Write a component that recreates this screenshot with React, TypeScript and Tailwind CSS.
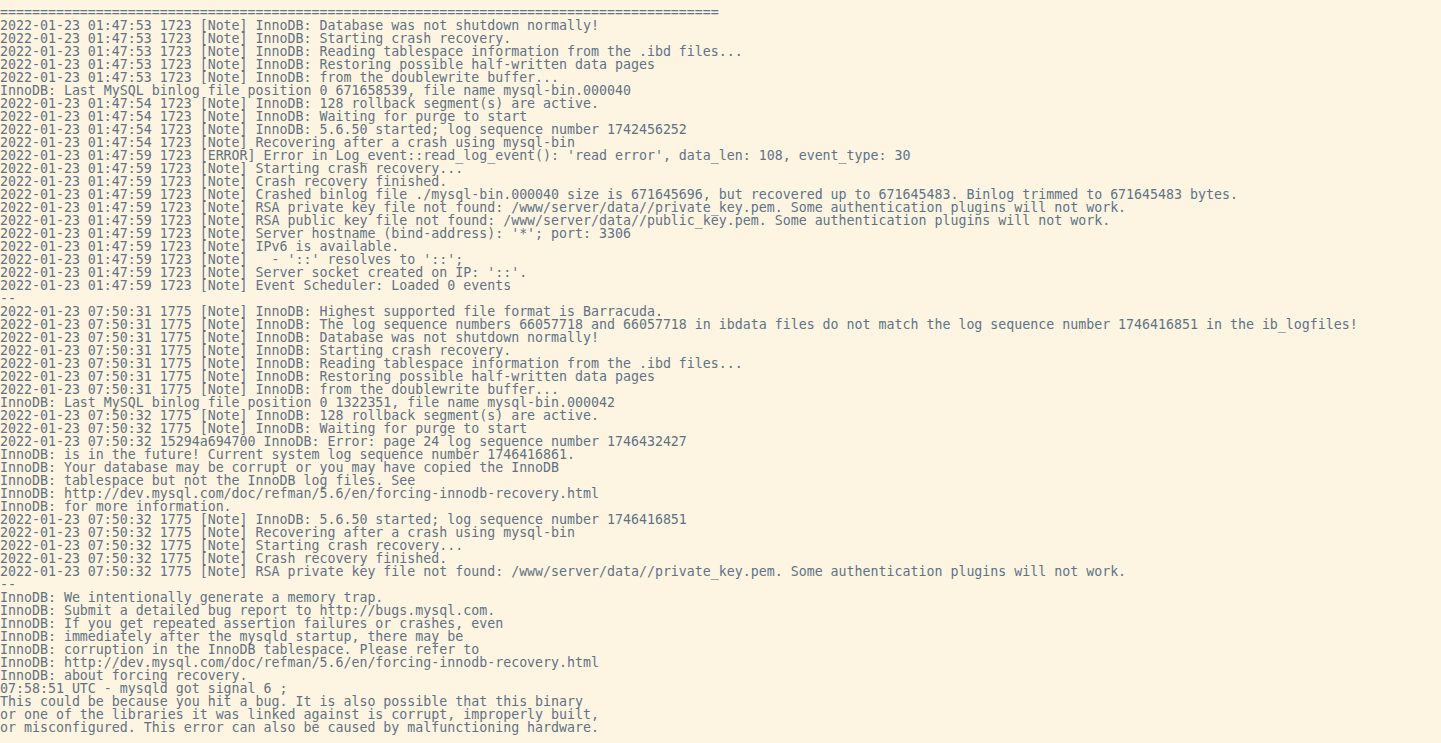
const LINES: string[] = [
  "==========================================================================================",
  "2022-01-23 01:47:53 1723 [Note] InnoDB: Database was not shutdown normally!",
  "2022-01-23 01:47:53 1723 [Note] InnoDB: Starting crash recovery.",
  "2022-01-23 01:47:53 1723 [Note] InnoDB: Reading tablespace information from the .ibd files...",
  "2022-01-23 01:47:53 1723 [Note] InnoDB: Restoring possible half-written data pages",
  "2022-01-23 01:47:53 1723 [Note] InnoDB: from the doublewrite buffer...",
  "InnoDB: Last MySQL binlog file position 0 671658539, file name mysql-bin.000040",
  "2022-01-23 01:47:54 1723 [Note] InnoDB: 128 rollback segment(s) are active.",
  "2022-01-23 01:47:54 1723 [Note] InnoDB: Waiting for purge to start",
  "2022-01-23 01:47:54 1723 [Note] InnoDB: 5.6.50 started; log sequence number 1742456252",
  "2022-01-23 01:47:54 1723 [Note] Recovering after a crash using mysql-bin",
  "2022-01-23 01:47:59 1723 [ERROR] Error in Log_event::read_log_event(): 'read error', data_len: 108, event_type: 30",
  "2022-01-23 01:47:59 1723 [Note] Starting crash recovery...",
  "2022-01-23 01:47:59 1723 [Note] Crash recovery finished.",
  "2022-01-23 01:47:59 1723 [Note] Crashed binlog file ./mysql-bin.000040 size is 671645696, but recovered up to 671645483. Binlog trimmed to 671645483 bytes.",
  "2022-01-23 01:47:59 1723 [Note] RSA private key file not found: /www/server/data//private_key.pem. Some authentication plugins will not work.",
  "2022-01-23 01:47:59 1723 [Note] RSA public key file not found: /www/server/data//public_key.pem. Some authentication plugins will not work.",
  "2022-01-23 01:47:59 1723 [Note] Server hostname (bind-address): '*'; port: 3306",
  "2022-01-23 01:47:59 1723 [Note] IPv6 is available.",
  "2022-01-23 01:47:59 1723 [Note]   - '::' resolves to '::';",
  "2022-01-23 01:47:59 1723 [Note] Server socket created on IP: '::'.",
  "2022-01-23 01:47:59 1723 [Note] Event Scheduler: Loaded 0 events",
  "--",
  "2022-01-23 07:50:31 1775 [Note] InnoDB: Highest supported file format is Barracuda.",
  "2022-01-23 07:50:31 1775 [Note] InnoDB: The log sequence numbers 66057718 and 66057718 in ibdata files do not match the log sequence number 1746416851 in the ib_logfiles!",
  "2022-01-23 07:50:31 1775 [Note] InnoDB: Database was not shutdown normally!",
  "2022-01-23 07:50:31 1775 [Note] InnoDB: Starting crash recovery.",
  "2022-01-23 07:50:31 1775 [Note] InnoDB: Reading tablespace information from the .ibd files...",
  "2022-01-23 07:50:31 1775 [Note] InnoDB: Restoring possible half-written data pages",
  "2022-01-23 07:50:31 1775 [Note] InnoDB: from the doublewrite buffer...",
  "InnoDB: Last MySQL binlog file position 0 1322351, file name mysql-bin.000042",
  "2022-01-23 07:50:32 1775 [Note] InnoDB: 128 rollback segment(s) are active.",
  "2022-01-23 07:50:32 1775 [Note] InnoDB: Waiting for purge to start",
  "2022-01-23 07:50:32 15294a694700 InnoDB: Error: page 24 log sequence number 1746432427",
  "InnoDB: is in the future! Current system log sequence number 1746416861.",
  "InnoDB: Your database may be corrupt or you may have copied the InnoDB",
  "InnoDB: tablespace but not the InnoDB log files. See",
  "InnoDB: http://dev.mysql.com/doc/refman/5.6/en/forcing-innodb-recovery.html",
  "InnoDB: for more information.",
  "2022-01-23 07:50:32 1775 [Note] InnoDB: 5.6.50 started; log sequence number 1746416851",
  "2022-01-23 07:50:32 1775 [Note] Recovering after a crash using mysql-bin",
  "2022-01-23 07:50:32 1775 [Note] Starting crash recovery...",
  "2022-01-23 07:50:32 1775 [Note] Crash recovery finished.",
  "2022-01-23 07:50:32 1775 [Note] RSA private key file not found: /www/server/data//private_key.pem. Some authentication plugins will not work.",
  "--",
  "InnoDB: We intentionally generate a memory trap.",
  "InnoDB: Submit a detailed bug report to http://bugs.mysql.com.",
  "InnoDB: If you get repeated assertion failures or crashes, even",
  "InnoDB: immediately after the mysqld startup, there may be",
  "InnoDB: corruption in the InnoDB tablespace. Please refer to",
  "InnoDB: http://dev.mysql.com/doc/refman/5.6/en/forcing-innodb-recovery.html",
  "InnoDB: about forcing recovery.",
  "07:58:51 UTC - mysqld got signal 6 ;",
  "This could be because you hit a bug. It is also possible that this binary",
  "or one of the libraries it was linked against is corrupt, improperly built,",
  "or misconfigured. This error can also be caused by malfunctioning hardware.",
];

export default function App() {
  return (
    <div className="w-[1441px] h-[743px] overflow-hidden bg-[#fdf5e2]">
      <pre className="m-0 pt-[6px] pl-0 font-['DejaVu_Sans_Mono',monospace] text-[13.27px] leading-[13px] text-[#5f7384] whitespace-pre">
        {LINES.join("\n")}
      </pre>
    </div>
  );
}
